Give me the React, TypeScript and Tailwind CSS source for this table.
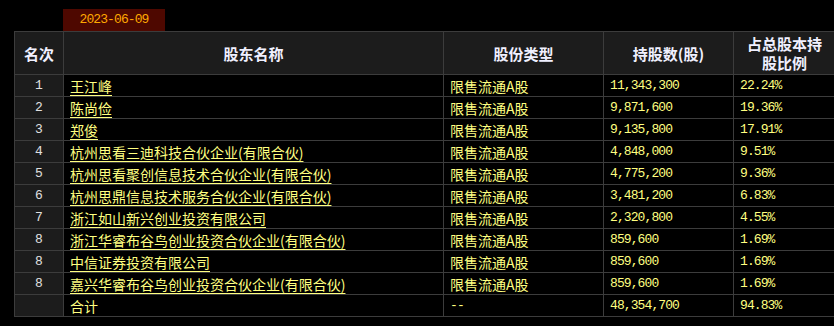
const rows = [
  { rank: '1', name: '王江峰', type: '限售流通A股', shares: '11,343,300', pct: '22.24%' },
  { rank: '2', name: '陈尚俭', type: '限售流通A股', shares: '9,871,600', pct: '19.36%' },
  { rank: '3', name: '郑俊', type: '限售流通A股', shares: '9,135,800', pct: '17.91%' },
  { rank: '4', name: '杭州思看三迪科技合伙企业(有限合伙)', type: '限售流通A股', shares: '4,848,000', pct: '9.51%' },
  { rank: '5', name: '杭州思看聚创信息技术合伙企业(有限合伙)', type: '限售流通A股', shares: '4,775,200', pct: '9.36%' },
  { rank: '6', name: '杭州思鼎信息技术服务合伙企业(有限合伙)', type: '限售流通A股', shares: '3,481,200', pct: '6.83%' },
  { rank: '7', name: '浙江如山新兴创业投资有限公司', type: '限售流通A股', shares: '2,320,800', pct: '4.55%' },
  { rank: '8', name: '浙江华睿布谷鸟创业投资合伙企业(有限合伙)', type: '限售流通A股', shares: '859,600', pct: '1.69%' },
  { rank: '8', name: '中信证券投资有限公司', type: '限售流通A股', shares: '859,600', pct: '1.69%' },
  { rank: '8', name: '嘉兴华睿布谷鸟创业投资合伙企业(有限合伙)', type: '限售流通A股', shares: '859,600', pct: '1.69%' },
]

const cjk = { fontFamily: '"Noto Sans CJK SC", sans-serif' }
const mono = { fontFamily: '"Liberation Mono", "Noto Sans CJK SC", monospace' }

// shared cell classes
const cell = 'border border-[#3c3c3c] pl-[6px] text-[#ffff80]'
const num = 'border border-[#3c3c3c] pl-[6px] text-[#ffff80] text-[13px] tracking-[-0.9px]'

export default function App() {
  return (
    <div className="w-[834px] h-[326px] bg-black overflow-hidden" style={cjk}>
      <div className="pt-[9px] pl-[63px]">
        <div
          className="w-[102px] h-[22px] bg-[#4e0800] text-[#ffa800] text-[13px] tracking-[-0.9px] flex items-center justify-center"
          style={mono}
        >
          2023-06-09
        </div>
      </div>
      <table className="ml-[14px] w-[821px] table-fixed border-collapse text-[14px]">
        <colgroup>
          <col className="w-[49px]" />
          <col className="w-[380px]" />
          <col className="w-[160px]" />
          <col className="w-[130px]" />
          <col className="w-[102px]" />
        </colgroup>
        <thead>
          <tr className="h-[43px] bg-[#1c1c1c] text-[#f0f0ff] text-[15px] leading-[19px]">
            <th className="border border-[#3c3c3c] font-bold">名次</th>
            <th className="border border-[#3c3c3c] font-bold">股东名称</th>
            <th className="border border-[#3c3c3c] font-bold">股份类型</th>
            <th className="border border-[#3c3c3c] font-bold">持股数(股)</th>
            <th className="border border-[#3c3c3c] font-bold">
              占总股本持
              <br />
              股比例
            </th>
          </tr>
        </thead>
        <tbody>
          {rows.map((r, i) => (
            <tr key={i} className="h-[22px] leading-[20px]">
              <td className="border border-[#3c3c3c] bg-[#1c1c1c] text-center text-[#e0e0e0] text-[13px]" style={mono}>
                {r.rank}
              </td>
              <td className={cell + ' whitespace-nowrap'}>
                <span className="underline underline-offset-[3px]">{r.name}</span>
              </td>
              <td className={cell}>{r.type}</td>
              <td className={num} style={mono}>
                {r.shares}
              </td>
              <td className={num} style={mono}>
                {r.pct}
              </td>
            </tr>
          ))}
          <tr className="h-[22px] leading-[20px]">
            <td className="border border-[#3c3c3c] bg-[#1c1c1c]"></td>
            <td className={cell}>合计</td>
            <td className={num} style={mono}>--</td>
            <td className={num} style={mono}>
              48,354,700
            </td>
            <td className={num} style={mono}>
              94.83%
            </td>
          </tr>
        </tbody>
      </table>
    </div>
  )
}
